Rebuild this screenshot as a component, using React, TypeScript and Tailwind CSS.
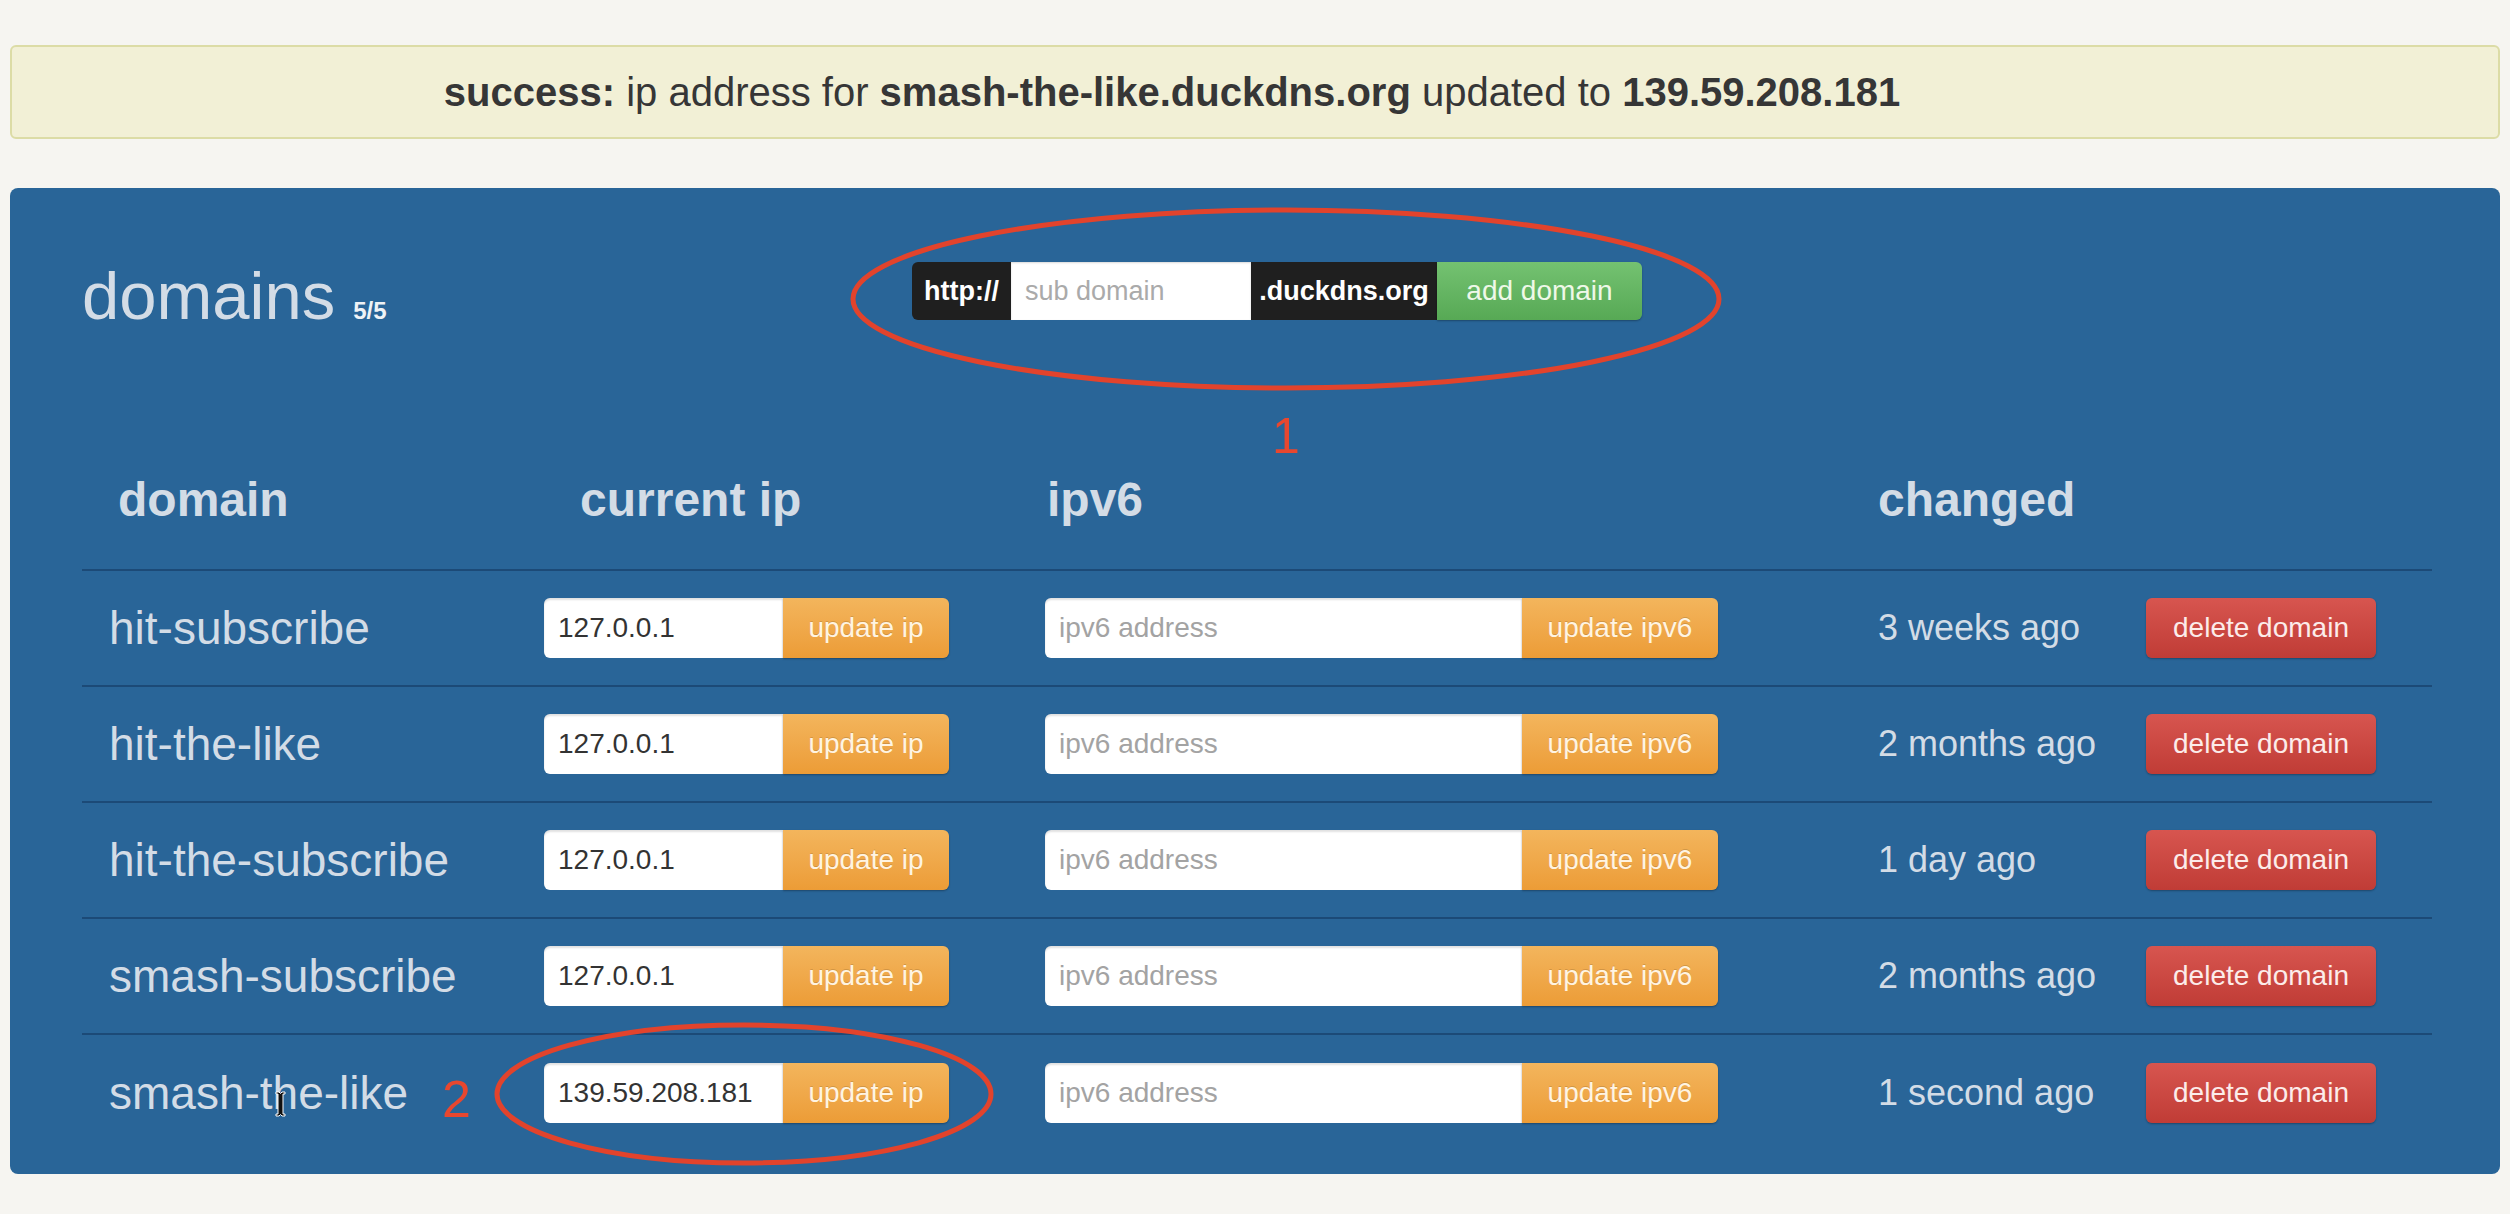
import React from 'react';

interface Row {
  name: string;
  ip: string;
  changed: string;
}

const rows: Row[] = [
  { name: 'hit-subscribe', ip: '127.0.0.1', changed: '3 weeks ago' },
  { name: 'hit-the-like', ip: '127.0.0.1', changed: '2 months ago' },
  { name: 'hit-the-subscribe', ip: '127.0.0.1', changed: '1 day ago' },
  { name: 'smash-subscribe', ip: '127.0.0.1', changed: '2 months ago' },
  { name: 'smash-the-like', ip: '139.59.208.181', changed: '1 second ago' },
];

function AddDomain() {
  return (
    <div className="flex h-[58px] text-[27px]">
      <span className="flex w-[99px] items-center justify-center rounded-l-md bg-[#1f1f1f] font-bold text-white">http://</span>
      <input
        className="w-[240px] bg-white px-[14px] text-[#333] outline-none placeholder:text-[#aaa] shadow-[inset_0_1px_2px_rgba(0,0,0,0.15)]"
        placeholder="sub domain"
      />
      <span className="flex w-[186px] items-center justify-center bg-[#1f1f1f] font-bold text-white">.duckdns.org</span>
      <button className="w-[205px] rounded-r-md bg-linear-to-b from-[#74c271] to-[#57a955] text-[28px] text-[#eef8e8] shadow-[0_1px_2px_rgba(0,0,0,0.3)]">
        add domain
      </button>
    </div>
  );
}

function IpGroup({ value, placeholder, label, inputW, btnW }: { value?: string; placeholder?: string; label: string; inputW: string; btnW: string }) {
  return (
    <div className="flex h-[60px] text-[28px]">
      <input
        className={`${inputW} rounded-l-md bg-white px-[14px] text-[#333] outline-none placeholder:text-[#a3a3a3] shadow-[inset_0_2px_2px_rgba(0,0,0,0.12)]`}
        defaultValue={value}
        placeholder={placeholder}
      />
      <button className={`${btnW} rounded-r-md bg-linear-to-b from-[#f3b55c] to-[#ec9c36] text-[#fff4e2] shadow-[0_1px_2px_rgba(0,0,0,0.3)] [text-shadow:0_-1px_0_rgba(0,0,0,0.15)]`}>
        {label}
      </button>
    </div>
  );
}

export default function App() {
  return (
    <div className="relative min-h-screen overflow-hidden bg-[#f6f5f1] px-[10px] pt-[45px] pb-[40px] font-['Liberation_Sans',Arial,sans-serif]">
      {/* flash message */}
      <div className="flex h-[94px] items-center justify-center rounded-md border-2 border-[#dcdca6] bg-[#f2f0d6] pr-[166px] text-[40px] text-[#363636]">
        <p>
          <b>success:</b> ip address for <b>smash-the-like.duckdns.org</b> updated to <b>139.59.208.181</b>
        </p>
      </div>

      <section className="mt-[49px] rounded-lg bg-[#296598] pt-[74px] pr-[68px] pb-[23px] pl-[72px] text-[#d3dce6]">
        <div className="flex h-[58px] items-center">
          <div className="flex w-[830px] items-baseline pt-[8px]">
            <h1 className="text-[67px] leading-none">domains</h1>
            <span className="ml-[18px] text-[24px] font-bold text-[#eef2f6]">5/5</span>
          </div>
          <AddDomain />
        </div>

        <div className="mt-[111px] grid grid-cols-[462px_501px_833px_268px_1fr]">
          <div className="col-span-5 grid h-[140px] grid-cols-subgrid items-center border-b-2 border-[#1c4a77] text-[48px] font-bold">
            <div className="pl-[36px]">domain</div>
            <div className="pl-[36px]">current ip</div>
            <div className="pl-[2px]">ipv6</div>
            <div>changed</div>
            <div />
          </div>

          {rows.map((row, idx) => (
            <div
              key={row.name}
              className={`col-span-5 grid h-[116px] grid-cols-subgrid items-center ${idx < rows.length - 1 ? 'border-b-2 border-[#1c4a77]' : ''}`}
            >
              <div className="pl-[27px] text-[46px]">{row.name}</div>
              <IpGroup value={row.ip} label="update ip" inputW="w-[239px]" btnW="w-[166px]" />
              <IpGroup placeholder="ipv6 address" label="update ipv6" inputW="w-[477px]" btnW="w-[196px]" />
              <div className="text-[36px]">{row.changed}</div>
              <button className="h-[60px] w-[230px] rounded-md bg-linear-to-b from-[#d7554f] to-[#c03c36] text-[28px] text-[#fcecea] shadow-[0_1px_2px_rgba(0,0,0,0.3)]">
                delete domain
              </button>
            </div>
          ))}
        </div>
      </section>

      {/* red annotations drawn over the screenshot */}
      <svg className="pointer-events-none absolute top-0 left-0" width="2510" height="1214" viewBox="0 0 2510 1214">
        <ellipse cx="1286" cy="299" rx="433" ry="89" fill="none" stroke="#e2432c" strokeWidth="5" />
        <ellipse cx="744" cy="1094" rx="247" ry="69" fill="none" stroke="#e2432c" strokeWidth="5" />
        <g transform="translate(276 1092)">
          <path d="M0 0h3l1.5 1.5L6 0h3v2H7v20h2v2H6l-1.5-1.5L3 24H0v-2h2V2H0z" fill="#111" stroke="#fff" strokeWidth="1" />
        </g>
      </svg>
      <span className="absolute top-[411px] left-[1272px] text-[50px] leading-none text-[#e8472f]">1</span>
      <span className="absolute top-[1073px] left-[442px] text-[52px] leading-none text-[#e8472f]">2</span>
    </div>
  );
}
